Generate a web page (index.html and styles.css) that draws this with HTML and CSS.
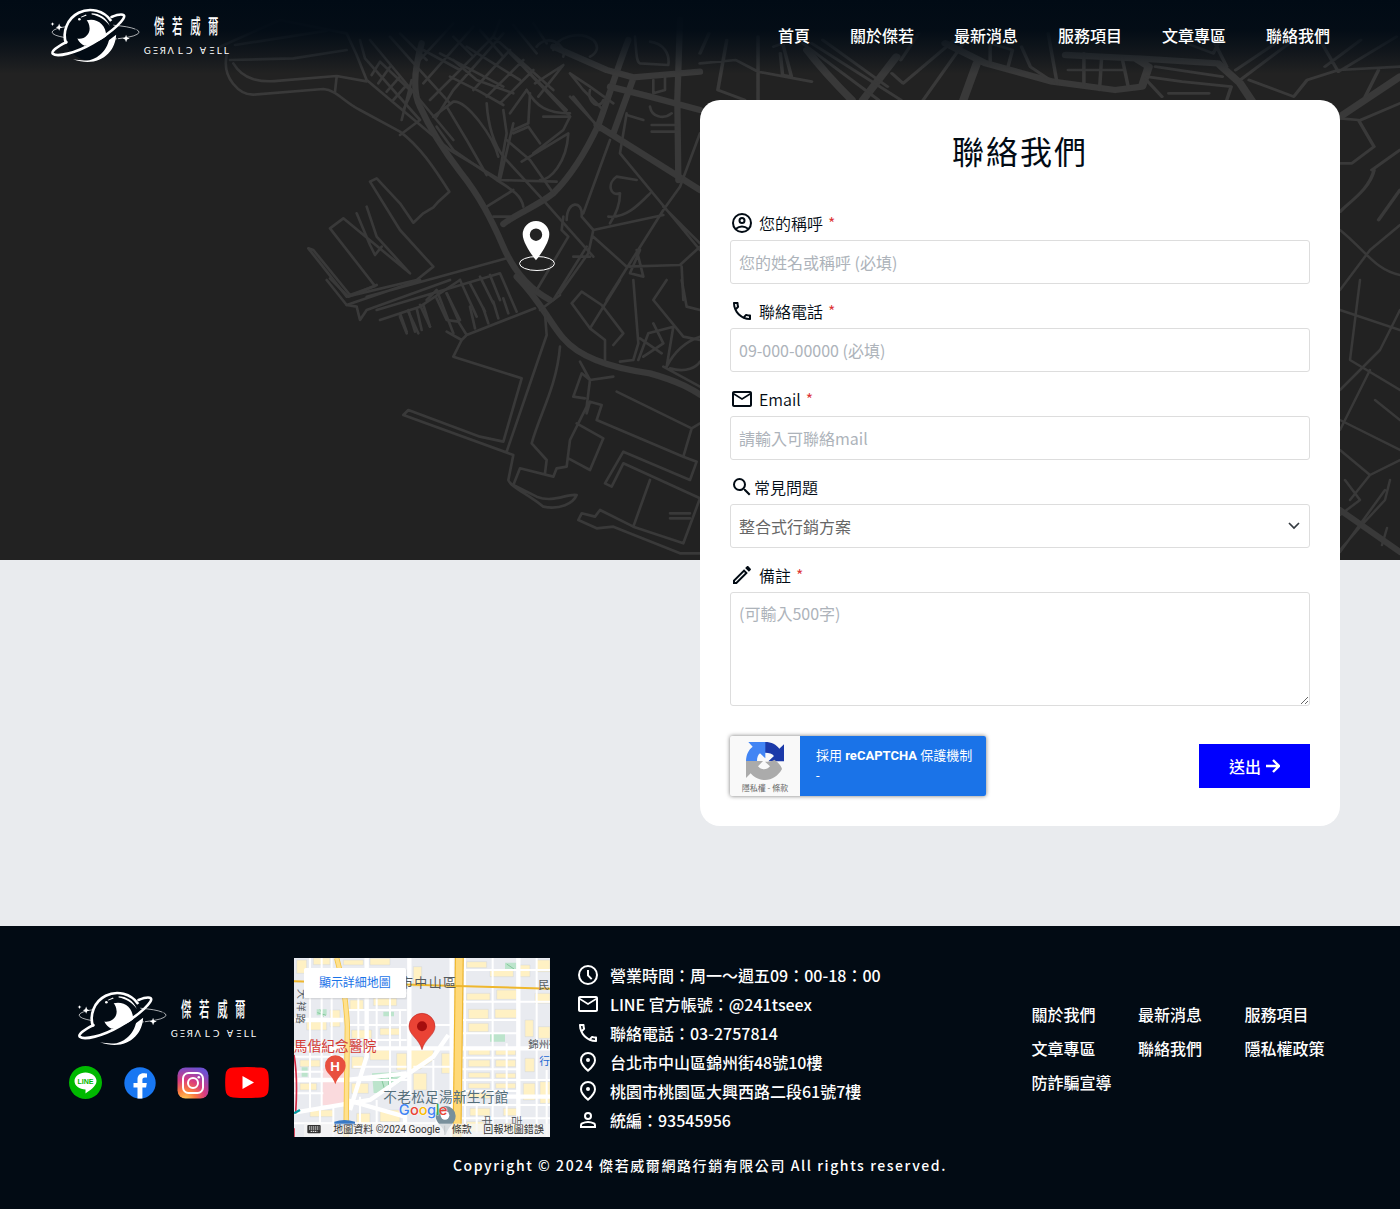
FILE: index.html
```html
<!DOCTYPE html>
<html lang="zh-Hant">
<head>
<meta charset="utf-8">
<title>聯絡我們 - 傑若威爾</title>
<link rel="stylesheet" href="styles.css">
</head>
<body>
<svg class="sprite" aria-hidden="true">
  <symbol id="logo" viewBox="60 20 540 172">
    <ellipse cx="196" cy="96" rx="131" ry="23" fill="none" stroke="#fff" stroke-width="2" stroke-dasharray="70 3 40 2"/>
    <circle cx="180" cy="106" r="76" fill="#020b14"/>
    <path d="M107 131A77 77 0 0 1 243 62" fill="none" stroke="#fff" stroke-width="8"/>
    <path d="M169 60c30-8 59 12 59 48-18 14-43 25-65 29-10-5-18-12-22-22 20 4 38-12 37-31-1-12-4-18-9-24z" fill="#fff"/>
    <path d="M184 39c24 0 45 14 55 38-15-20-33-30-55-34zM151 50l16-7 2 3-16 6z" fill="#fff"/>
    <circle cx="147" cy="57" r="4" fill="#fff"/>
    <path d="M258 104c-2 54-53 102-130 74 27 5 49 5 62-2 28-12 35-34 38-50z" fill="#fff"/>
    <path d="M238 112c-4 23-14 42-32 54 13-17 18-29 21-44z" fill="#020b14"/>
    <path d="M108 126c-31 15-47 29-41 35 12 11 68-1 121-32 61-35 102-76 93-84-6-5-19-2-37 5" fill="none" stroke="#fff" stroke-width="8" stroke-linecap="round"/>
    <path d="M86 70l3 8 7 3-7 3-3 8-3-8-7-3 7-3zM288 104l3 8 8 3-8 3-3 8-3-8-7-3 7-3zM66 66l2 4 4 1-4 2-2 4-2-4-4-2 4-1z" fill="#fff"/>
    <text class="logo-cn" transform="scale(.56 1.1)" x="665 762 860 956" y="92.500">傑若威爾</text>
    <text class="logo-en" x="341 368 389 413 444 469 510 538 562 583" y="161">GΞЯΛLƆⱯΞLL</text>
  </symbol>
  <symbol id="i-user" viewBox="0 0 24 24"><g fill="none" stroke="currentColor" stroke-width="2"><circle cx="12" cy="12" r="9"/><circle cx="12" cy="9.5" r="2.5"/><path d="M5.5 18c4-3 9-3 13 0"/></g></symbol>
  <symbol id="i-call" viewBox="0 0 24 24"><path d="M6.54 5c.06.89.21 1.76.45 2.59l-1.2 1.2c-.41-1.2-.67-2.47-.76-3.79h1.51m9.86 12.02c.85.24 1.72.39 2.6.45v1.49c-1.32-.09-2.59-.35-3.8-.75l1.2-1.19M7.5 3H4c-.55 0-1 .45-1 1 0 9.39 7.61 17 17 17 .55 0 1-.45 1-1v-3.49c0-.55-.45-1-1-1-1.24 0-2.45-.2-3.57-.57-.1-.04-.21-.05-.31-.05-.26 0-.51.1-.71.29l-2.2 2.2c-2.83-1.45-5.15-3.76-6.59-6.59l2.2-2.2c.28-.28.36-.67.25-1.02C8.7 6.45 8.5 5.25 8.5 4c0-.55-.45-1-1-1z"/></symbol>
  <symbol id="i-mail" viewBox="0 0 24 24"><path d="M22 6c0-1.1-.9-2-2-2H4c-1.1 0-2 .9-2 2v12c0 1.1.9 2 2 2h16c1.1 0 2-.9 2-2V6zm-2 0l-8 5-8-5h16zm0 12H4V8l8 5 8-5v10z"/></symbol>
  <symbol id="i-search" viewBox="0 0 24 24"><path d="M15.5 14h-.79l-.28-.27A6.47 6.47 0 0 0 16 9.500A6.500 6.500 0 1 0 9.500 16c1.610 0 3.090-.59 4.230-1.570l.27.28v.79l5 4.990L20.490 19l-4.990-5zm-6 0a4.500 4.500 0 1 1 0-9 4.500 4.500 0 0 1 0 9z"/></symbol>
  <symbol id="i-edit" viewBox="0 0 24 24"><path d="M14.060 9.020l.92.92L5.920 19H5v-.92l9.060-9.060M17.660 3c-.25 0-.51.1-.7.29l-1.830 1.830 3.750 3.750 1.830-1.830c.39-.39.39-1.020 0-1.410l-2.340-2.340c-.2-.2-.45-.29-.71-.29zm-3.600 3.190L3 17.250V21h3.750L17.810 9.940l-3.750-3.750z"/></symbol>
  <symbol id="i-clock" viewBox="0 0 24 24"><path d="M12 7v5.400l3.700 3.700" fill="none" stroke="currentColor" stroke-width="2"/><circle cx="12" cy="12" r="9" fill="none" stroke="currentColor" stroke-width="2"/></symbol>
  <symbol id="i-place" viewBox="0 0 24 24"><path d="M12 19.350q3.050-2.800 4.525-5.088T18 10.200q0-2.725-1.738-4.463T12 4 7.738 5.737 6 10.200q0 1.775 1.475 4.063T12 19.350ZM12 22q-4.025-3.425-6.013-6.362T4 10.200q0-3.750 2.413-5.975T12 2t5.588 2.225T20 10.200q0 2.500-1.987 5.438T12 22Z"/><circle cx="12" cy="10" r="2"/></symbol>
  <symbol id="i-person" viewBox="0 0 24 24"><g fill="none" stroke="currentColor" stroke-width="2"><circle cx="12" cy="8" r="3"/><path d="M5 19v-1.800q0-1.200 1.100-1.800q5.900-2.800 11.800 0q1.100.6 1.100 1.800V19z"/></g></symbol>
</svg>

<main class="page">
  <svg class="city" viewBox="0 0 1400 560" aria-hidden="true">
    <g class="roads" transform="scale(.33333)">
      <g transform="translate(660 0)">
        <path class="w4" d="M605 130C585 200 575 270 600 320C625 375 670 450 720 515C780 590 815 660 850 740C880 810 925 865 990 900"/>
        <path class="w4" d="M1225 120C1190 210 1160 310 1135 375C1100 450 1060 520 1000 580C950 620 890 640 850 672"/>
        <path class="w4" d="M1130 375L1440 570M1000 140L1160 210L1240 232L1440 215M1170 260L1290 290L1440 330M1380 60L1372 300L1375 540M1240 235L1180 400"/>
        <path d="M20 165C5 235 60 285 100 284L310 267C350 270 370 305 420 330L540 395C600 440 640 500 688 575L655 605L640 622L610 640L580 668L540 610L470 535L450 545L540 690L640 800L590 840L380 890L265 745L280 750L390 885L465 858L330 685L370 655L570 820L470 710L440 620M410 640L450 735L465 765L485 740"/>
        <path d="M30 180L220 175L380 150M40 190C70 240 120 248 180 242L350 228L440 244M45 135L320 92M0 140L180 60L380 100L410 165L440 240L690 450L840 540L1010 545M350 230L345 275M420 120L435 175L600 360L540 405M450 120L700 420M510 110L590 200L690 310M540 100L620 180"/>
        <path d="M455 225L480 185L570 270M475 250L510 200M500 275L540 230M520 300L560 255M550 330L575 275M575 240L545 360M590 190L700 70M610 250L760 80M630 300L820 110M650 350L700 270L850 100M690 230L780 275L850 315M700 180L770 240L880 280M740 140L900 240M660 160L850 260M610 150L720 210M820 110L1000 270M870 160L1040 330M900 190L1050 350M760 270L870 150M800 290L910 180M840 310L940 210M870 340L920 270"/>
        <path d="M640 350L700 305C740 300 820 410 835 470M680 320L740 420L800 525M650 380L700 450L830 540M800 310C805 380 820 430 850 470L965 595L1120 770M850 330L860 400L835 540M880 370L840 540M930 280L925 370L880 390M970 350L1050 350L1030 390L940 460M905 485L1045 400C1040 490 990 540 960 540M920 270C950 320 980 340 1050 340M880 400L925 380L960 430M945 250L1030 195L955 290M1050 220L1090 270L1150 330M1050 290L1130 375M1050 220L1110 260L1180 310M1060 290L1140 390M830 540C880 570 905 590 910 620M800 620L880 570M820 650L870 650"/>
        <path d="M1170 420L1090 640M1220 340L1200 460L1440 750M1440 400L1380 560L1330 630L1160 900M1330 620L1440 730M1000 580L930 480L860 420M1250 540L1190 530C1160 550 1170 590 1200 580C1200 610 1190 640 1170 670M1120 690L1330 645M1165 650C1220 655 1260 610 1290 580M1120 710L1220 800L1380 795L1440 740M1060 770L1110 770M1040 660C1040 600 1090 600 1085 650L1120 690L1105 760L1020 880M1030 650L1025 690L1045 710L950 870M1250 750L1270 830L1230 820L1260 750M1100 740L1000 900M1385 800L1390 900"/>
        <path d="M1245 110C1250 170 1250 185 1260 190L1345 195C1350 160 1330 130 1290 125M1300 240L1300 280L1335 270L1335 230M1290 320C1295 350 1330 360 1355 340M1295 375H1370M1295 395H1370M1220 345L1270 360M1110 270C1100 310 1140 330 1150 300M1000 150C1010 110 1080 90 1120 120C1140 140 1130 160 1110 170M950 140C980 100 1040 130 1030 170M700 110L760 170M780 90L850 170M880 75L950 160M840 60L820 110M940 70L980 130"/>
        <path d="M440 890L860 775M470 930L840 820L890 935M380 915L600 840M620 900L650 870L700 1000M680 880L715 960M720 840L770 950M750 850L795 935M780 830L820 910M810 825L840 900M540 950L560 1000M565 935L595 1000M600 915L630 980"/>
      </g>
      <g transform="translate(660 840)">
        <path class="w4" d="M890 -10C960 60 990 130 1030 175C1080 235 1180 265 1290 280C1380 305 1420 330 1450 350"/>
        <path d="M320 0L380 75L410 80L420 120L440 90L690 0M330 -5L385 50L470 15M480 120L600 80L720 0M540 100L560 155M565 90L585 155M590 85L605 150M610 75L630 140M650 55L680 120L715 125L740 165M680 40L720 120M750 80L765 145M790 85L805 130M820 65L835 115M850 55L865 100M680 155L725 180L740 165L880 110L945 85M725 180L700 230L905 295L850 485L780 470L565 390L550 405L880 525L865 600C870 620 930 645 970 680C1020 690 1060 670 1070 645C1040 640 1000 670 950 650L880 615L900 565L1000 590L1010 565L1040 560L1050 480L1100 380L1110 300L1085 280L1060 350L1095 355M975 100L980 165L860 515M1020 200C1010 320 960 400 935 490L980 540L975 580M1070 430L1150 475L1110 570L1045 535M1100 400L1110 365L1145 375L1130 420L1390 530L1430 545L1410 600L1210 515L1155 610L1175 620L1210 550L1440 655L1390 790L1240 740L1140 690L1125 710L1085 700L1075 720L1130 745L1180 740L1380 820L1440 820M1290 600L1240 740M1190 335L1415 445L1390 530M1415 445L1440 430M1080 245L1110 300L1180 290"/>
        <path d="M1020 45L960 90M1200 0L1110 145L1055 70L1085 35L1145 75L1210 160L1180 195M1110 145L1155 180L1155 240M1240 0L1255 190L1240 240L1200 245M1255 240L1285 160L1360 140L1340 260M1260 175L1325 220M1300 130L1330 190L1270 230M1340 0L1300 60L1390 170L1440 180M1385 0L1400 80L1440 90M1340 260C1370 200 1410 180 1440 170M1350 265C1400 280 1430 260 1440 245M1330 260L1440 320M1350 700H1410M1350 715H1410"/>
      </g>
    </g>
    <g class="roads" transform="translate(700 0) scale(.4464 .33333)">
      <path class="w4" d="M550 130L640 190L790 245L930 270L990 260L1005 200L975 175L820 165M980 175L1160 190L1210 250L1240 310M440 170L365 300M240 150C280 220 310 260 340 300M1434 350L1568 230M620 190L590 300"/>
      <path d="M0 190L80 180L130 215L250 245M60 120L40 270L100 300M130 110V300M165 140L185 130L205 230L185 225L180 160M230 130L400 300M250 130L450 300M275 120L420 260M570 120L455 250L430 220M490 100L450 180M590 130L500 300M20 100L0 160M780 100L800 250M860 160V255M900 165L895 270M825 210H950M945 170L960 265M650 190V130L700 150L690 200M720 140L740 200L790 245M1000 230L1080 245L1190 260L1180 300M1020 200L1170 230M1000 240L1035 290M1050 280H1140M1200 210L1300 120M1230 240L1330 290L1360 240L1430 210L1568 200M1380 100L1430 215L1560 110M1480 120L1400 200M1150 120L1180 200M1340 110L1210 240M1050 110L1150 160L1180 80M1520 210L1490 290M1434 355L1475 360L1510 440L1460 490L1434 490M1480 360L1568 310M1510 510C1500 570 1450 610 1434 635M1520 660L1568 570M1505 510L1568 450"/>
    </g>
    <g class="roads thin">
      <path d="M1340 230C1365 250 1375 270 1400 275M1340 290L1370 250L1400 225M1340 310L1400 330M1360 280L1350 360L1400 390M1340 390L1380 350L1400 310M1370 370L1340 430M1340 420L1400 450M1375 400L1400 420M1340 450L1370 475L1400 460M1345 480L1360 500L1340 515M1370 475L1350 500M1385 490L1340 552M1360 527L1385 500L1390 480M1360 527L1340 550M1382 545L1387 528"/>
      <path class="w2" d="M1340 510L1400 552"/>
    </g>
    <ellipse cx="537" cy="263.500" rx="17.500" ry="7" fill="none" stroke="#fff"/>
    <path fill="#fff" fill-rule="evenodd" d="M536 221a13.300 13.300 0 0 0-13.300 13.300c0 10 13.300 26 13.300 26s13.300-16 13.300-26A13.300 13.300 0 0 0 536 221zm0 7.500a6.200 6.200 0 1 1 0 12.400 6.200 6.200 0 0 1 0-12.400z"/>
  </svg>

  <header class="header">
    <svg class="logo" role="img" aria-label="傑若威爾 GERALD VELL"><use href="#logo"/></svg>
    <nav class="nav">
      <a>首頁</a><a>關於傑若</a><a>最新消息</a><a>服務項目</a><a>文章專區</a><a>聯絡我們</a>
    </nav>
  </header>

  <form class="card">
    <h1>聯絡我們</h1>
    <div class="field">
      <label><svg class="icon"><use href="#i-user"/></svg><span>您的稱呼</span><b>*</b></label>
      <input type="text" placeholder="您的姓名或稱呼 (必填)">
    </div>
    <div class="field">
      <label><svg class="icon"><use href="#i-call"/></svg><span>聯絡電話</span><b>*</b></label>
      <input type="text" placeholder="09-000-00000 (必填)">
    </div>
    <div class="field">
      <label><svg class="icon"><use href="#i-mail"/></svg><span>Email</span><b>*</b></label>
      <input type="text" placeholder="請輸入可聯絡mail">
    </div>
    <div class="field">
      <label class="tight"><svg class="icon"><use href="#i-search"/></svg><span>常見問題</span></label>
      <div class="select"><span>整合式行銷方案</span><svg width="12" height="8" viewBox="0 0 12 8"><path d="M1 1l5 5 5-5" fill="none" stroke="#343a40" stroke-width="1.700"/></svg></div>
    </div>
    <div class="field">
      <label><svg class="icon"><use href="#i-edit"/></svg><span>備註</span><b>*</b></label>
      <textarea placeholder="(可輸入500字)"></textarea>
    </div>
    <div class="actions">
      <div class="captcha">
        <div class="captcha-mark">
          <svg width="40" height="40" viewBox="0 0 120 120">
            <path fill="#1c3aa9" d="M60 3c20 0 34 8 43 20l14-13v51H70l17-16c-5-8-14-10-27-10z"/>
            <path fill="#4285f4" d="M3 62c0-22 8-36 20-45L10 3h51v49L45 37C38 43 36 50 36 62z"/>
            <path fill="#ababab" d="M3 60h51L39 76c9 12 27 12 36 0L60 62c14 0 22-2 28-6 11 8 21 18 23 28-11 20-30 33-51 33-20 0-34-9-43-20L3 111z"/>
          </svg>
          <span>隱私權 - 條款</span>
        </div>
        <div class="captcha-text"><p>採用 <strong>reCAPTCHA</strong> 保護機制</p><p>-</p></div>
      </div>
      <button type="button"><span>送出</span><svg width="14" height="14" viewBox="0 0 14 14"><path d="M0 7h13M7 1l6 6-6 6" fill="none" stroke="#fff" stroke-width="2.400"/></svg></button>
    </div>
  </form>
</main>

<footer class="footer">
  <div class="footer-row">
    <div class="brand">
      <svg class="logo" role="img" aria-label="傑若威爾 GERALD VELL"><use href="#logo"/></svg>
      <div class="social">
        <svg class="line" width="33" height="33" viewBox="0 0 33 33"><circle cx="16.500" cy="16.500" r="16.500" fill="#00b900"/><path fill="#fff" d="M16.500 6.500c6 0 11 3.700 11 8.600 0 5.300-7 9.600-11 12.400v-4c-6 0-11-3.500-11-8.400s5-8.600 11-8.600z"/><text x="8.400" y="17.900" class="line-word" textLength="16" lengthAdjust="spacingAndGlyphs">LINE</text></svg>
        <svg class="facebook" width="32" height="32" viewBox="0 0 32 32"><circle cx="16" cy="16" r="15.700" fill="#1877f2"/><path fill="#fff" d="M13.500 31.500V20.500h-4V16h4v-3.500c0-4 2.400-6.200 6-6.200 1.700 0 3.500.3 3.500.3v3.900h-2c-2 0-2.600 1.200-2.600 2.500v3h4.400l-.7 4.500h-3.700v11z"/></svg>
        <svg class="instagram" width="32" height="32" viewBox="0 0 32 32"><defs><radialGradient id="ig" cx=".25" cy="1.050" r="1.100"><stop offset="0" stop-color="#ffd35a"/><stop offset=".3" stop-color="#fb7b3f"/><stop offset=".6" stop-color="#d83a80"/><stop offset="1" stop-color="#6e50d2"/></radialGradient></defs><rect x=".5" y=".5" width="31" height="31" rx="8" fill="url(#ig)"/><g fill="none" stroke="#fff" stroke-width="2"><rect x="6" y="6" width="20" height="20" rx="5.500"/><circle cx="16" cy="16" r="5"/></g><circle cx="21.800" cy="10.200" r="1.300" fill="#fff"/></svg>
        <svg class="youtube" width="44" height="31" viewBox="0 0 44 31"><path fill="#f00" d="M8 .6Q22-.5 36 .6Q43 1 43.500 8Q44.200 15.500 43.500 23Q43 30 36 30.400Q22 31.500 8 30.400Q1 30 .5 23Q-.2 15.500.5 8Q1 1 8 .6z"/><path fill="#fff" d="M17.500 9v13l11.500-6.500z"/></svg>
      </div>
    </div>

    <div class="gmap">
      <svg viewBox="12 24 768 537" preserveAspectRatio="none">
        <rect x="12" y="24" width="768" height="537" fill="#e9ebf0"/>
        <g class="blocks">
          <path d="M20 30h30v40H20zM70 24h50v20H70zM160 30h60v15h-60zM240 25h60v20h-60zM180 150h40v30h-40zM250 145h70v22h-70zM50 215h60v25H50zM120 180h30v50h-30zM185 240h60v25h-60zM270 235h60v20h-60zM30 330h60v20H30zM30 400h50v20H30zM185 320h35v35h-35zM240 300h60v30h-60zM320 310h30v50h-30zM370 50h25v60h-25zM360 300h70v30l-40 28h-30zM185 400h50v30h-50zM270 480h60v35h-60zM60 480h70v20H60zM200 490h40v40h-40zM370 370h40v50h-40zM455 310h25v60h-25z"/>
          <path d="M530 35h60v18h-60zM600 60h70v20h-70zM530 130h70v20h-70zM620 120h60v28h-60zM535 178h60v28h-60zM615 178h65v26h-65zM535 220h60v25h-60zM535 297h65v18h-65zM617 300h60v15h-60zM535 330h65v20h-65zM617 330h60v20h-60zM535 368h65v15h-65zM617 370h60v14h-60zM535 400h65v15h-65zM617 400h60v15h-60zM535 430h65v15h-65zM690 45h30v35h-30zM740 30h40v35h-40zM735 130h45v30h-45zM705 210h25v50h-25zM745 230h35v35h-35zM705 325h28v40h-28zM700 400h35v50h-35zM750 395h30v65h-30zM540 475h60v22h-60zM640 475h40v22h-40zM530 515h50v30h-50zM640 520h50v25h-50z"/>
        </g>
        <path fill="#fadadd" d="M100 355h62v100l-20 10H95z"/>
        <path fill="#bce4cc" d="M246 370l87-5v30l-60 34h-22zM600 250h45v25h-45zM35 352h18v28H35zM645 38h35v22h-35zM80 178h30v18H80zM280 185h32v14h-32z"/>
        <path d="M250 380l40 10 30-15M270 372l15 50M300 370l-5 40M82 188l26 8M90 178l10 22M650 42l22 15" stroke="#65bb80" stroke-width="2" fill="none"/>
        <g fill="none" stroke="#fff">
          <path stroke-width="13" d="M358 24V440M485 24V561M685 24V561M12 295H780M12 488L240 450L430 320L475 255M170 450L345 500V561M12 210H160M230 24V320L180 480M12 390H170L350 370M640 440H780"/>
          <path stroke-width="6" d="M60 24V480M95 24V470M125 24V330M205 60V290M260 60V290M300 130V440M330 180V300M180 130H350M175 180H350M175 225H480M180 270H350M12 320H160M12 365H100M12 430H100M190 350H350M190 390H360M430 330V430M370 350H480M608 24V561M525 24V561M740 24V561M510 60H780M510 155H780M510 210H690M510 250H690M510 323H690M510 358H690M510 390H780M510 423H690M510 465H780M510 505H780M560 460V550M650 280V520M770 360V561M210 440V561M260 450V561M130 470V561M90 470V561M12 520H460M440 420V561"/>
        </g>
        <g fill="none">
          <path stroke="#f5c443" stroke-width="16" d="M140 24C155 75 168 140 172 230L168 561"/><path stroke="#ffe18d" stroke-width="11" d="M140 24C155 75 168 140 172 230L168 561"/>
          <path stroke="#efb72d" stroke-width="27" d="M508 24L501 561"/><path stroke="#ffd978" stroke-width="20" d="M508 24L501 561"/>
          <path stroke="#efb72d" stroke-width="6" d="M12 94L370 104L780 116"/>
          <path stroke="#d32b45" stroke-width="5" d="M12 315Q24 380 17 490M12 535V561"/>
          <path stroke="#009ba3" stroke-width="7" d="M12 490l18-10"/>
        </g>
        <text class="m-place" x="330" y="110" textLength="168">市中山區</text>
        <text class="m-place m-edge" x="745" y="118">民</text>
        <g transform="translate(25 116) rotate(93)"><text class="m-road" textLength="105">大祥路</text></g>
        <text class="m-hosp" x="11" y="302" textLength="248">馬偕紀念醫院</text>
        <text class="m-road" x="715" y="294">錦州街</text>
        <text class="m-metro" x="748" y="346">行</text>
        <text class="m-shop" x="280" y="455" textLength="375">不老松足湯新生行館</text>
        <g transform="translate(580 496) rotate(90)"><text class="m-road">中</text></g><g transform="translate(668 496) rotate(90)"><text class="m-road">吉</text></g>
        <path fill="#e8503f" d="M136 316a31 31 0 0 0-31 31c0 22 23 28 31 56 8-28 31-34 31-56a31 31 0 0 0-31-31z"/>
        <text class="m-h" x="121" y="362">H</text>
        <path fill="#ea4335" stroke="#b31412" stroke-width="1.500" d="M396 190a39 39 0 0 0-39 39c0 27 30 36 39 70 9-34 39-43 39-70a39 39 0 0 0-39-39z"/><circle cx="396" cy="229" r="15" fill="#a50e0e"/>
        <path fill="#78909c" d="M467 468a30 30 0 0 0-30 30c0 22 22 28 30 58 8-30 30-36 30-58a30 30 0 0 0-30-30z"/><circle cx="465" cy="496" r="13" fill="#fff"/>
        <text class="m-google" x="326 360 386 411 437 446" y="495"><tspan fill="#4285f4">G</tspan><tspan fill="#ea4335">o</tspan><tspan fill="#fbbc04">o</tspan><tspan fill="#4285f4">g</tspan><tspan fill="#34a853">l</tspan><tspan fill="#ea4335">e</tspan></text>
        <path d="M133 515q30-10 62 0v12h-62z" fill="#3879c5"/>
        <rect x="42" y="521" width="738" height="40" fill="#f5f5f5" opacity=".75"/>
        <rect x="52" y="525" width="40" height="25" rx="3" fill="#333"/><path d="M57 531h31M57 537h31M62 544h20" stroke="#fff" stroke-width="3" stroke-dasharray="4 2"/>
        <text class="m-legal" x="130" y="549" textLength="320">地圖資料 ©2024 Google</text>
        <path d="M464 527v28" stroke="#999"/>
        <text class="m-legal" x="485" y="549" textLength="60">條款</text>
        <text class="m-legal" x="580" y="549" textLength="182">回報地圖錯誤</text>
        <rect x="44" y="59" width="306" height="89" fill="#999" opacity=".25"/>
        <rect x="42" y="54" width="306" height="90" rx="5" fill="#fff"/>
        <text class="m-link" x="87" y="111" textLength="215">顯示詳細地圖</text>
      </svg>
    </div>

    <ul class="contact">
      <li><svg class="icon"><use href="#i-clock"/></svg>營業時間：周一～週五09：00-18：00</li>
      <li><svg class="icon"><use href="#i-mail"/></svg>LINE 官方帳號：@241tseex</li>
      <li><svg class="icon"><use href="#i-call"/></svg>聯絡電話：03-2757814</li>
      <li><svg class="icon"><use href="#i-place"/></svg>台北市中山區錦州街48號10樓</li>
      <li><svg class="icon"><use href="#i-place"/></svg>桃園市桃園區大興西路二段61號7樓</li>
      <li><svg class="icon"><use href="#i-person"/></svg>統編：93545956</li>
    </ul>

    <nav class="links">
      <a>關於我們</a><a>最新消息</a><a>服務項目</a>
      <a>文章專區</a><a>聯絡我們</a><a>隱私權政策</a>
      <a>防詐騙宣導</a>
    </nav>
  </div>
  <p class="copyright">Copyright © 2024 傑若威爾網路行銷有限公司 All rights reserved.</p>
</footer>
</body>
</html>
```
FILE: styles.css
```css
* { box-sizing: border-box; }
body {
  margin: 0;
  font-family: "Noto Sans CJK TC", "Noto Sans", sans-serif;
  font-size: 16px;
  color: #020b14;
}
h1, p, ul { margin: 0; padding: 0; font-weight: inherit; }
.sprite { position: absolute; width: 0; height: 0; }
.icon { width: 24px; height: 24px; fill: currentColor; flex: none; }

.page {
  position: relative;
  height: 926px;
  background: linear-gradient(#222 560px, #e9ebee 560px);
}
.city { position: absolute; top: 0; left: 0; width: 1400px; height: 560px; }
.roads { fill: none; stroke: #393939; stroke-width: 8; stroke-linejoin: round; stroke-linecap: round; }
.roads .w4 { stroke-width: 19; }
.roads.thin { stroke-width: 2.5; }
.roads .w2 { stroke-width: 6; }

.header {
  position: relative;
  display: flex;
  justify-content: space-between;
  align-items: flex-start;
  height: 100px;
  padding: 7px 70px 0 50px;
  background: linear-gradient(#010b15 0, rgba(1, 11, 21, .92) 30px, rgba(1, 11, 21, .5) 52px, rgba(1, 11, 21, 0) 74px);
}
.logo { width: 180px; height: 57px; display: block; }
.logo-cn { font-size: 56px; font-weight: 500; fill: #fff; }
.logo-en { font: 28px "DejaVu Sans", sans-serif; fill: #fff; }
.nav { display: flex; gap: 40px; padding-top: 16px; line-height: 24px; font-weight: 500; color: #fff; }

.card {
  position: relative;
  width: 640px;
  height: 726px;
  margin: 0 60px 0 auto;
  padding: 30px;
  background: #fff;
  border-radius: 20px;
}
h1 {
  height: 82px;
  font-size: 32px;
  font-weight: 400;
  letter-spacing: 2px;
  line-height: 41px;
  text-align: center;
}
.field { margin-bottom: 16px; }
.field label { display: flex; align-items: center; height: 28px; padding-bottom: 7px; font-weight: 350; }
.field label span { margin-left: 5px; line-height: 24px; padding-top: 1px; }
.field label.tight span { margin-left: 0; }
.field label b { margin-left: 5px; color: #dc3232; font-weight: 350; font-size: 16px; line-height: 20px; }
input, textarea, .select {
  display: block;
  width: 100%;
  height: 44px;
  padding: 0 8px;
  border: 1px solid #ddd;
  border-radius: 3px;
  background: #fff;
  font: 400 16px "Noto Sans CJK TC", sans-serif;
  color: #666;
}
input::placeholder, textarea::placeholder { color: #adb3ba; opacity: 1; }
textarea { height: 114px; padding-top: 8px; line-height: 24px; resize: vertical; }
.select { display: flex; align-items: center; justify-content: space-between; padding-right: 9px; }
.actions { display: flex; justify-content: space-between; align-items: center; padding-top: 14px; }
.captcha {
  display: flex;
  width: 256px;
  height: 60px;
  overflow: hidden;
  border-radius: 2px;
  box-shadow: 0 0 4px #777;
  background: #f9f9f9;
}
.captcha-mark { width: 70px; display: flex; flex-direction: column; align-items: center; padding-top: 5px; font-size: 8px; line-height: 14px; color: #666; white-space: nowrap; }
.captcha-text { flex: 1; padding: 10px 0 0 16px; background: #1a73e8; color: #fff; font: 13px/20px Roboto, "Noto Sans CJK TC", sans-serif; white-space: nowrap; }
.captcha-text strong { font-weight: 700; }
button {
  display: flex;
  align-items: center;
  justify-content: center;
  gap: 5px;
  width: 111px;
  height: 44px;
  padding: 0;
  border: 0;
  background: #00f;
  color: #fff;
  font: 500 16px "Noto Sans CJK TC", sans-serif;
}

.footer { height: 283px; padding-top: 32px; background: #020b14; color: #fff; font-weight: 500; }
.footer-row { display: flex; height: 179px; }
.brand { width: 294px; padding: 32px 0 0 69px; }
.brand .logo { margin-left: 8px; }
.social { display: flex; align-items: center; margin-top: 19px; }
.facebook { margin-left: 22px; }
.instagram { margin-left: 21px; }
.youtube { margin-left: 16px; }
.gmap { width: 256px; height: 179px; }
.gmap svg { display: block; width: 256px; height: 179px; }
.contact { width: 481.5px; padding: 2px 0 0 26px; list-style: none; }
.contact li { display: flex; align-items: center; gap: 10px; height: 29px; white-space: nowrap; }
.links { display: grid; grid-template-columns: repeat(3, 106.5px); grid-auto-rows: 34px; line-height: 34px; padding-top: 39px; white-space: nowrap; }
.copyright { margin-top: 17px; text-align: center; font-size: 14px; line-height: 22px; letter-spacing: 1.58px; }

.line-word { font: 700 7px "Liberation Sans", sans-serif; fill: #00b900; }
.blocks { fill: #fff1c4; stroke: #d3d6dd; stroke-width: 1.5; }
.gmap text { font-family: "Noto Sans CJK TC", sans-serif; font-weight: 400; }
.gmap .m-place { font-size: 39px; fill: #555b60; }
.gmap .m-edge { font-size: 34px; }
.gmap .m-road { font-size: 31px; fill: #555b60; }
.gmap .m-hosp { font-size: 41px; fill: #d33b36; }
.gmap .m-shop { font-size: 41px; fill: #546e7a; }
.gmap .m-metro { font-size: 32px; fill: #1967d2; }
.gmap .m-h { font: 700 40px "Liberation Sans", sans-serif; fill: #fff; }
.gmap .m-google { font: 500 44px Inter, sans-serif; stroke: #fff; stroke-width: 2; paint-order: stroke; }
.gmap .m-legal { font-family: Roboto, "Noto Sans CJK TC", sans-serif; font-size: 30px; fill: #333; }
.gmap .m-link { font-size: 36px; fill: #1a73e8; }
```
